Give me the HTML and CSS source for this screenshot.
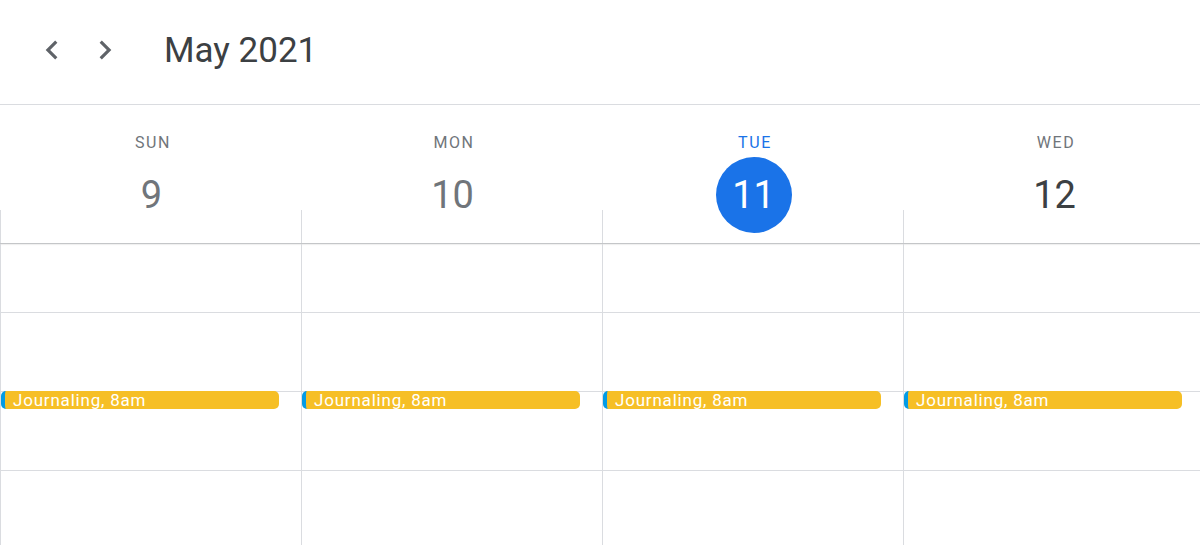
FILE: index.html
```html
<!DOCTYPE html>
<html lang="en">
<head>
<meta charset="utf-8">
<title>Calendar – May 2021</title>
<link rel="stylesheet" href="styles.css">
</head>
<body>
<div class="app">
  <header class="topbar">
    <button class="nav-btn" aria-label="Previous week">
      <svg viewBox="0 0 24 24" width="38" height="38"><path d="M15.41 7.41L14 6l-6 6 6 6 1.41-1.41L10.83 12z" fill="#5f6368"/></svg>
    </button>
    <button class="nav-btn" aria-label="Next week">
      <svg viewBox="0 0 24 24" width="38" height="38"><path d="M10 6L8.59 7.41 13.17 12l-4.58 4.59L10 18l6-6z" fill="#5f6368"/></svg>
    </button>
    <h1 class="title">May 2021</h1>
  </header>

  <div class="days">
    <div class="day"><span class="wd">SUN</span><span class="num">9</span></div>
    <div class="day"><span class="wd">MON</span><span class="num">10</span></div>
    <div class="day today"><span class="wd">TUE</span><span class="num">11</span></div>
    <div class="day upcoming"><span class="wd">WED</span><span class="num">12</span></div>
  </div>

  <div class="body">
    <div class="col">
      <div class="slot first"></div>
      <div class="slot"></div>
      <div class="slot"><div class="event">Journaling, 8am</div></div>
      <div class="slot"></div>
    </div>
    <div class="col">
      <div class="slot first"></div>
      <div class="slot"></div>
      <div class="slot"><div class="event">Journaling, 8am</div></div>
      <div class="slot"></div>
    </div>
    <div class="col">
      <div class="slot first"></div>
      <div class="slot"></div>
      <div class="slot"><div class="event">Journaling, 8am</div></div>
      <div class="slot"></div>
    </div>
    <div class="col">
      <div class="slot first"></div>
      <div class="slot"></div>
      <div class="slot"><div class="event">Journaling, 8am</div></div>
      <div class="slot"></div>
    </div>
  </div>
</div>
</body>
</html>
```

FILE: styles.css
```css
* { box-sizing: border-box; }

html, body {
  margin: 0;
  padding: 0;
  background: #fff;
  overflow: hidden;
}

body {
  font-family: Roboto, "Liberation Sans", Arial, sans-serif;
  color: #3c4043;
}

.app {
  width: 1200px;
  height: 545px;
  overflow: hidden;
}

.topbar {
  height: 105px;
  border-bottom: 1px solid #dadce0;
  display: flex;
  align-items: center;
  padding-left: 33px;
  padding-bottom: 4px;
}

.nav-btn {
  width: 38px;
  height: 38px;
  padding: 0;
  margin: 0 15px 0 0;
  border: none;
  background: none;
  display: flex;
  align-items: center;
  justify-content: center;
}

.nav-btn + .nav-btn { margin-right: 0; }

.nav-btn svg { display: block; }

.title {
  margin: 0 0 0 40px;
  font-size: 35px;
  font-weight: 400;
  color: #3c4043;
  letter-spacing: 0;
}

.days {
  display: grid;
  grid-template-columns: repeat(4, 301px);
  border-bottom: 1px solid #c4c6c8;
  box-shadow: 0 1px 1px rgba(0,0,0,0.06);
}

.day {
  display: flex;
  flex-direction: column;
  align-items: center;
  padding: 28px 0 10px;
  background: linear-gradient(#dadce0, #dadce0) left bottom / 1px 33px no-repeat;
}

.wd {
  font-size: 16px;
  line-height: 20px;
  font-weight: 400;
  letter-spacing: 1.6px;
  padding-left: 5px;
  color: #70757a;
}

.num {
  margin-top: 4px;
  width: 76px;
  height: 76px;
  margin-left: 2px;
  border-radius: 50%;
  display: flex;
  align-items: center;
  justify-content: center;
  font-size: 38px;
  font-weight: 400;
  color: #70757a;
}

.today .wd { color: #1a73e8; }
.today .num { background: #1a73e8; color: #fff; }
.upcoming .num { color: #3c4043; }

.body {
  display: grid;
  grid-template-columns: repeat(4, 301px);
}

.col {
  border-left: 1px solid #dadce0;
  display: flex;
  flex-direction: column;
}

.slot {
  height: 79px;
  border-bottom: 1px solid #dadce0;
  margin-right: -1px;
  flex: none;
}

.slot.first { height: 69px; }

.event {
  margin-top: -1px;
  width: 278px;
  height: 18px;
  border-radius: 5px;
  background: #f6bf26;
  border-left: 4px solid #039be5;
  color: #fff;
  font-size: 17px;
  line-height: 18px;
  letter-spacing: 0.8px;
  padding-left: 8px;
  white-space: nowrap;
}
```
